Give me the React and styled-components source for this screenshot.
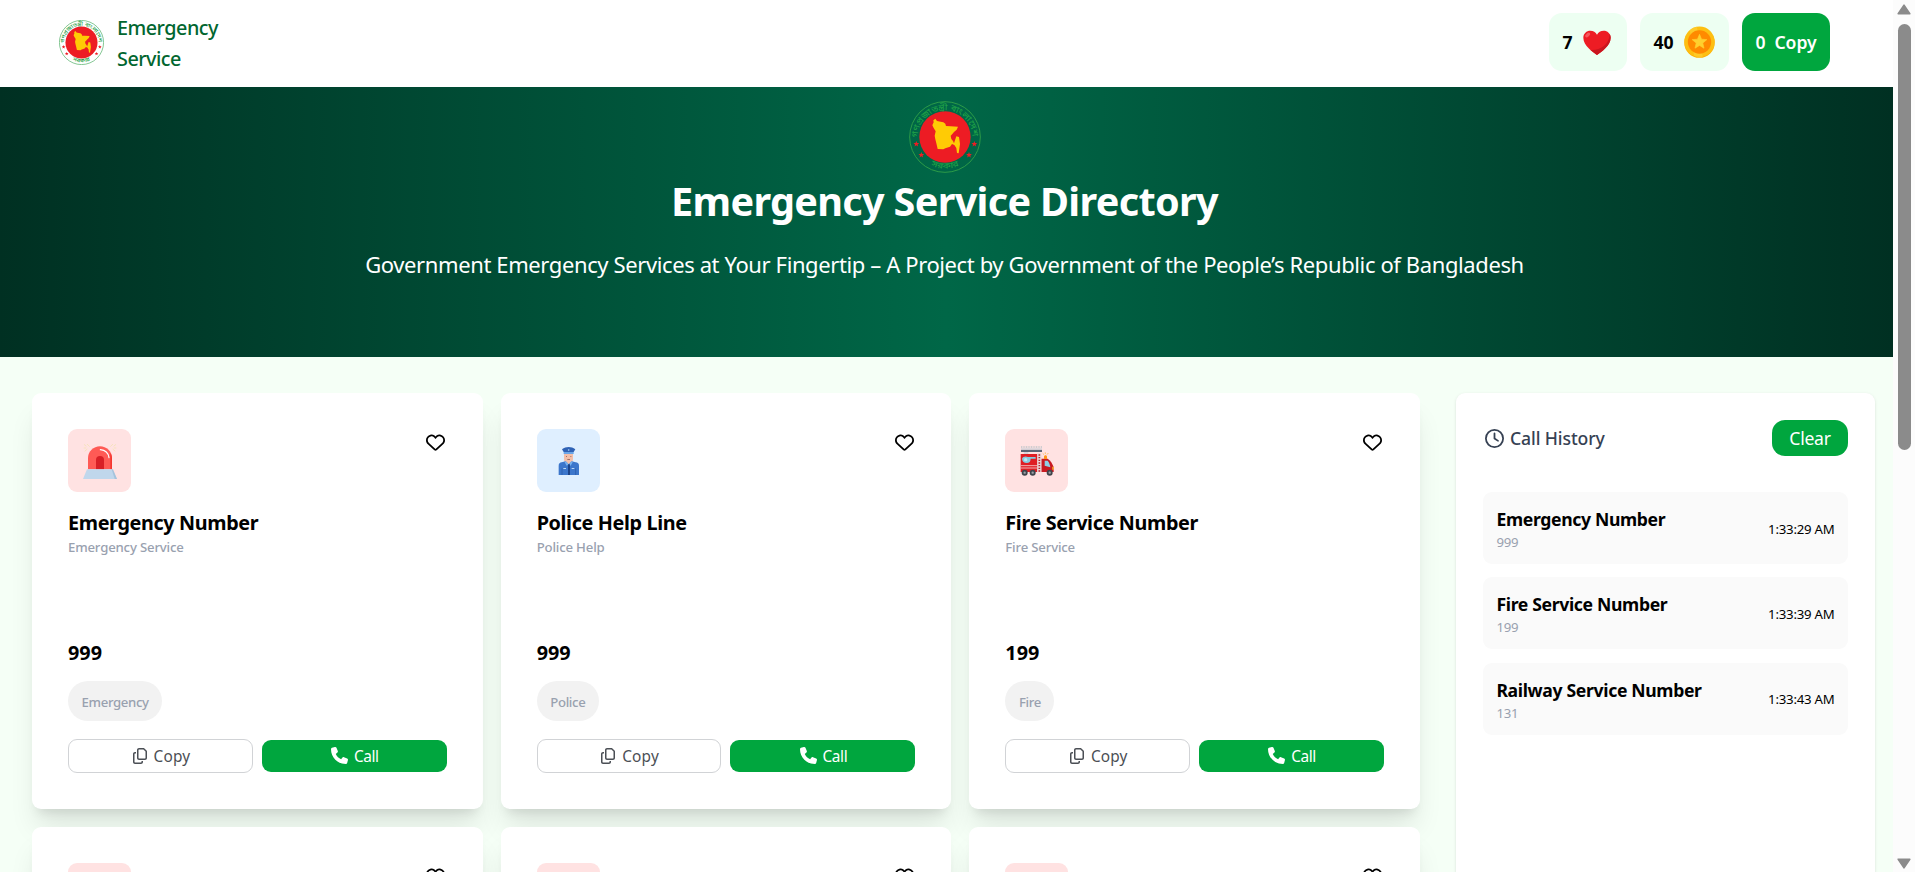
import React from "react";
import styled, { createGlobalStyle } from "styled-components";
import { FaRegHeart, FaRegCopy, FaRegClock, FaPhone } from "react-icons/fa6";

const GlobalStyle = createGlobalStyle`
  *, *::before, *::after { box-sizing: border-box; }
  body { margin: 0; overflow: hidden; background: #f5fff6; color: #000; font-family: "Noto Sans", "Open Sans", sans-serif; }
  h1, h2, h3, p { margin: 0; }
  button { font-family: inherit; cursor: pointer; }
  svg { display: block; flex: none; }
`;

const Window = styled.div`
  display: flex;
  width: 100%;
  height: 100vh;
  overflow: hidden;
`;

const Page = styled.div`
  flex: 1;
  min-width: 0;
  height: 100%;
  overflow: hidden;
`;

const Scrollbar = styled.div`
  width: 22px;
  height: 100%;
  padding: 4px 0 3px;
  background: #fcfcfc;
  display: flex;
  flex-direction: column;
  align-items: center;
  justify-content: space-between;
`;

const ScrollTrack = styled.div`
  flex: 1;
  width: 13px;
  margin: 9px 0;
`;

const ScrollThumb = styled.div`
  height: 426px;
  border-radius: 7px;
  background: #8b8b8b;
`;

const Navbar = styled.nav`
  height: 87px;
  padding: 0 63px 3px 59px;
  background: #fff;
  display: flex;
  align-items: center;
  justify-content: space-between;
`;

const Brand = styled.div`
  display: flex;
  align-items: center;
  gap: 13px;
`;

const BrandName = styled.h3`
  width: 110px;
  padding-top: 4px;
  font-size: 19.8px;
  line-height: 30.8px;
  font-weight: 500;
  letter-spacing: -0.5px;
  color: #016630;
`;

const Counters = styled.div`
  display: flex;
  gap: 13px;
`;

const Counter = styled.div`
  width: ${(p) => p.$width}px;
  height: 58px;
  padding-left: 13.5px;
  border-radius: 13px;
  display: flex;
  align-items: center;
  gap: ${(p) => (p.$solid ? 8.8 : 10.5)}px;
  font-size: 17.6px;
  font-weight: ${(p) => (p.$solid ? 600 : 700)};
  background: ${(p) => (p.$solid ? "#00a63e" : "#edfff2")};
  color: ${(p) => (p.$solid ? "#fff" : "#000")};
`;

const Hero = styled.header`
  height: 270px;
  padding: 14px 4px 0 0;
  display: flex;
  flex-direction: column;
  align-items: center;
  color: #fff;
  background: linear-gradient(90deg, #003022 0%, #006747 50%, #003022 100%);
`;

const HeroTitle = styled.h1`
  margin-top: 6.3px;
  font-size: 39.6px;
  line-height: 44px;
  font-weight: 700;
  letter-spacing: -0.68px;
`;

const HeroText = styled.p`
  margin-top: 25.5px;
  font-size: 22px;
  line-height: 30.8px;
  letter-spacing: -0.39px;
  white-space: nowrap;
`;

const Main = styled.main`
  padding: 36px 18px 0 32px;
  display: grid;
  grid-template-columns: 1388px 419px;
  gap: 36px;
`;

const CardGrid = styled.section`
  display: grid;
  grid-template-columns: repeat(3, 1fr);
  gap: 18px;
  align-content: start;
`;

const Card = styled.article`
  height: 416px;
  padding: 36px;
  border-radius: 9px;
  background: #fff;
  box-shadow: 0 22px 27.5px -5.5px rgba(0, 0, 0, 0.1), 0 8.8px 11px -6.6px rgba(0, 0, 0, 0.1);
`;

const CardTop = styled.div`
  display: flex;
  justify-content: space-between;
`;

const IconTile = styled.div`
  width: 63px;
  height: 63px;
  border-radius: 9px;
  background: ${(p) => p.$tint};
`;

const FavButton = styled.button`
  height: 20px;
  margin: 3px 1.5px 0 0;
  padding: 0;
  border: 0;
  background: none;
  color: #000;
`;

const CardTitle = styled.h2`
  margin-top: 15.8px;
  font-size: 19.8px;
  line-height: 30.8px;
  font-weight: 700;
  letter-spacing: -0.36px;
`;

const CardSubtitle = styled.p`
  padding-top: 0.8px;
  font-size: 13.2px;
  line-height: 17.6px;
  font-weight: 500;
  letter-spacing: -0.18px;
  color: #99a1af;
`;

const CardNumber = styled.h2`
  margin-top: 81.2px;
  font-size: 19.8px;
  line-height: 30.8px;
  font-weight: 700;
`;

const Badge = styled.span`
  display: block;
  width: fit-content;
  height: 40px;
  margin-top: 11.8px;
  padding: 13.2px 13.6px 0;
  border-radius: 20px;
  background: #f2f2f2;
  color: #99a1af;
  font-size: 13.2px;
  line-height: 17.6px;
  font-weight: 500;
  letter-spacing: -0.36px;
`;

const Actions = styled.div`
  margin-top: 18px;
  display: grid;
  grid-template-columns: 1fr 1fr;
  gap: 9px;
  align-items: center;
`;

const CopyButton = styled.button`
  height: 34px;
  padding: 0 0 0 1px;
  border: 1px solid #d1d3d6;
  border-radius: 9px;
  background: #fff;
  color: #4b4f55;
  display: flex;
  align-items: center;
  justify-content: center;
  gap: 6px;
  font-size: 15.4px;
  letter-spacing: 0.15px;
`;

const CallButton = styled(CopyButton)`
  height: 32px;
  border: 0;
  background: #00a63e;
  color: #fff;
  letter-spacing: -0.4px;
`;

const ButtonLabel = styled.span`
  padding-top: 1.5px;
`;

const History = styled.aside`
  height: 620px;
  padding: 27px;
  border-radius: 9px;
  background: #fff;
  box-shadow: 0 1.1px 3.3px rgba(0, 0, 0, 0.1), 0 1.1px 2.2px -1.1px rgba(0, 0, 0, 0.1);
`;

const HistoryHeader = styled.div`
  display: flex;
  align-items: center;
  justify-content: space-between;
  margin-bottom: 36px;
`;

const HistoryTitle = styled.h3`
  display: flex;
  align-items: center;
  gap: 6px;
  padding-left: 2px;
  font-size: 17.6px;
  font-weight: 500;
  letter-spacing: -0.1px;
  color: #364153;
`;

const ClearButton = styled.button`
  width: 76px;
  height: 36px;
  border: 0;
  border-radius: 13px;
  background: #00a63e;
  color: #fff;
  font-size: 17.6px;
  letter-spacing: -0.25px;
`;

const HistoryList = styled.div`
  display: grid;
  gap: 13.2px;
`;

const HistoryItem = styled.div`
  height: 72.1px;
  padding: 14px 13.5px 0 13.4px;
  border-radius: 9px;
  background: #fafafa;
  display: flex;
  justify-content: space-between;
`;

const CallName = styled.h3`
  font-size: 17.6px;
  line-height: 26.4px;
  font-weight: 700;
  letter-spacing: -0.34px;
`;

const CallNumber = styled.p`
  margin-top: 1.6px;
  font-size: 13.2px;
  line-height: 17.6px;
  letter-spacing: -0.2px;
  color: #99a1af;
`;

const CallTime = styled.span`
  margin-top: 14.6px;
  font-size: 13.2px;
  line-height: 17.6px;
  letter-spacing: -0.22px;
`;

const star = (cx, cy, r) =>
  Array.from({ length: 10 }, (_, i) => {
    const a = -Math.PI / 2 + (i * Math.PI) / 5;
    const q = i % 2 ? r * 0.45 : r;
    return `${(cx + q * Math.cos(a)).toFixed(2)},${(cy + q * Math.sin(a)).toFixed(2)}`;
  }).join(" ");

function Emblem({ size, id }) {
  return (
    <svg width={size} height={size} viewBox="-108 -108 216 216">
      <defs>
        <path id={`${id}-top`} d="M-82 2A82 82 0 0 1 82 2" />
        <path id={`${id}-bottom`} d="M-62 72A95 95 0 0 0 62 72" />
      </defs>
      <circle r="106" fill="none" stroke="#2f9e48" strokeWidth="2.8" />
      <circle r="77" fill="#ed1c24" />
      <polygon
        fill="#ffcb05"
        points="-35,-50 -29,-55 -24,-48 -13,-46 -5,-44 1,-40 3,-33 17,-32 39,-31 35,-22 27,-15 22,-9 17,-4 19,6 24,12 27,19 31,7 34,-2 42,0 45,21 41,49 36,48 34,33 28,24 21,21 15,29 1,34 -5,37 -22,36 -26,19 -29,7 -31,-4 -28,-17 -34,-27 -38,-35 -34,-44"
      />
      <g fill="#ed1c24">
        <polygon points={star(-86, 21, 9)} />
        <polygon points={star(-71, 54, 9)} />
        <polygon points={star(72, 54, 9)} />
        <polygon points={star(88, 21, 9)} />
      </g>
      <g fill="#1f9f46" fontFamily="Noto Sans Bengali, Noto Sans, sans-serif" fontWeight="500">
        <text fontSize="26">
          <textPath href={`#${id}-top`} textLength="254" lengthAdjust="spacingAndGlyphs">
            গণপ্রজাতন্ত্রী বাংলাদেশ
          </textPath>
        </text>
        <text fontSize="25" textAnchor="middle">
          <textPath href={`#${id}-bottom`} startOffset="50%" textLength="88" lengthAdjust="spacingAndGlyphs">
            সরকার
          </textPath>
        </text>
      </g>
    </svg>
  );
}

function HeartIcon() {
  return (
    <svg width="28" height="25" viewBox="0 0 84 75">
      <path fill="#ed1c24" d="M42 75C30 66 1 47 1 23 1 10 11 2 22 2c9 0 16 4 20 12C46 6 53 2 62 2c11 0 21 8 21 21 0 24-29 43-41 52z" />
      <path fill="#c9151e" d="M80 12c2 3 3 7 3 11 0 24-29 43-41 52-5-4-12-9-19-15 26 2 56-14 57-48z" />
      <ellipse cx="14" cy="15" rx="9" ry="5" transform="rotate(-42 14 15)" fill="#f6585d" />
    </svg>
  );
}

function CoinIcon() {
  return (
    <svg width="31" height="32" viewBox="-46 -48 92 96">
      <circle r="45.5" cy="2" fill="#ffb000" />
      <circle r="45.5" cy="-1" fill="#fdbf12" />
      <path d="M-29-36A45 45 0 0 1-8-46L10 44A45 45 0 0 1-16 42z" fill="#ffd43a" opacity=".55" />
      <circle r="35" fill="#ff8a00" />
      <polygon points={star(0, 0, 23)} fill="#ffd02e" stroke="#ffd02e" strokeWidth="2" strokeLinejoin="round" />
    </svg>
  );
}

function SirenIcon() {
  return (
    <svg width="63" height="63" viewBox="0 0 189 189">
      <g stroke="#f6e3bd" strokeWidth="3" fill="none">
        <path d="M48 46l7 6M57 45l8 8M47 57h8M50 67l8-7M144 46l-7 6M135 45l-8 8M145 57h-8M142 67l-8-7" />
      </g>
      <path fill="#ff5a55" d="M60 121V88a36 36 0 0 1 72 0v33z" />
      <path fill="#f4362f" d="M127 121V72c3 5 5 10 5 16v33z" />
      <path fill="#d81f26" d="M84 121V93a12 12 0 0 1 24 0v28z" />
      <path d="M97 62c14 1 24 10 26 24" stroke="#fff" strokeWidth="3.5" fill="none" strokeLinecap="round" />
      <path fill="#c0d7ec" d="M57 121h76l14 29H45z" />
      <path fill="#a5c3dc" d="M131 121h4l12 29h-7z" />
    </svg>
  );
}

function PoliceIcon() {
  return (
    <svg width="63" height="63" viewBox="0 0 189 189">
      <path fill="#f3bfa9" d="M81 75h27v14c0 9-4 13-6 14v9l-7 7-8-7v-9c-4-3-6-7-6-14z" />
      <path fill="#2f62b5" d="M75 61c6-5 13-7 20-7s14 2 20 7l-5 8H80z" />
      <path fill="#6aa5e8" d="M80 69h30v6H80z" />
      <circle cx="95" cy="63" r="2.5" fill="#b9d7f7" />
      <path fill="#8a5a50" d="M87 81h3v2h-3zM100 81h3v2h-3zM91 90h8v2h-8z" />
      <path fill="#3c76cb" d="M65 138v-28c0-7 4-9 9-10l12-3 9 9 9-9 12 3c6 1 10 3 10 10v28z" />
      <path fill="#76b0ed" d="M86 96l9 10-6 4-6-10zM104 96l-9 10 6 4 6-10z" />
      <path fill="#1d4489" d="M93 106h6v32h-6z" />
      <path stroke="#2858a5" strokeWidth="2" d="M75 118v20M116 118v20" />
      <path fill="#b9d7f7" d="M79 117h8v3h-8zM104 117h8v3h-8z" />
    </svg>
  );
}

function FireTruckIcon() {
  return (
    <svg width="63" height="63" viewBox="0 0 189 189">
      <path stroke="#d0cdd0" strokeWidth="6" strokeDasharray="3 2" d="M48 54h63" />
      <path fill="#5b6575" d="M48 62h63v7H48z" />
      <path fill="#d7d4da" d="M48 58h63v4H48zM56 69h14v6H56z" />
      <path fill="#df1d24" d="M47 75h50v54H47z" />
      <path fill="#c91a21" d="M109 129V89h19c10 6 14 15 18 25v15z" />
      <path fill="#e8d5d7" d="M97 73h12v56H97z" />
      <path stroke="#b9242b" strokeWidth="5" strokeDasharray="4 4" d="M103 76v52" />
      <path fill="#86cce1" d="M51 89c2-7 12-8 18-5h23v5H77c0 8-4 13-12 13S52 98 51 89z" />
      <circle cx="62" cy="92" r="5" fill="#c0e7f2" />
      <path stroke="#f2b1b4" strokeWidth="3" d="M47 110h50M47 117h50" />
      <path fill="#8fd0e4" d="M119 95h9c4 5 7 12 8 20l-17-5z" />
      <path fill="#ff9518" d="M117 90v-7c0-6 9-6 9 0v7z" />
      <path stroke="#ffbb55" strokeWidth="2.5" d="M113 73l4 4M121 70v5M130 72l-4 5" />
      <path fill="#ffc52e" d="M142 113h4v9h-4z" />
      <g fill="#3f454c">
        <circle cx="59" cy="131" r="9" />
        <circle cx="83" cy="131" r="9" />
        <circle cx="134" cy="131" r="9" />
      </g>
      <g fill="#9ba1a7">
        <circle cx="59" cy="131" r="3.5" />
        <circle cx="83" cy="131" r="3.5" />
        <circle cx="134" cy="131" r="3.5" />
      </g>
    </svg>
  );
}

const services = [
  { icon: SirenIcon, tint: "#ffe2e2", name: "Emergency Number", subtitle: "Emergency Service", number: "999", tag: "Emergency" },
  { icon: PoliceIcon, tint: "#dfefff", name: "Police Help Line", subtitle: "Police Help", number: "999", tag: "Police" },
  { icon: FireTruckIcon, tint: "#ffe2e2", name: "Fire Service Number", subtitle: "Fire Service", number: "199", tag: "Fire" },
];

const calls = [
  { name: "Emergency Number", number: "999", time: "1:33:29 AM" },
  { name: "Fire Service Number", number: "199", time: "1:33:39 AM" },
  { name: "Railway Service Number", number: "131", time: "1:33:43 AM" },
];

function CardHead({ tint, children }) {
  return (
    <CardTop>
      <IconTile $tint={tint}>{children}</IconTile>
      <FavButton aria-label="Favourite">
        <FaRegHeart size={19} />
      </FavButton>
    </CardTop>
  );
}

function ServiceCard({ icon: Icon, tint, name, subtitle, number, tag }) {
  return (
    <Card>
      <CardHead tint={tint}>
        <Icon />
      </CardHead>
      <CardTitle>{name}</CardTitle>
      <CardSubtitle>{subtitle}</CardSubtitle>
      <CardNumber>{number}</CardNumber>
      <Badge>{tag}</Badge>
      <Actions>
        <CopyButton>
          <FaRegCopy size={16} />
          <ButtonLabel>Copy</ButtonLabel>
        </CopyButton>
        <CallButton>
          <FaPhone size={17} />
          <ButtonLabel>Call</ButtonLabel>
        </CallButton>
      </Actions>
    </Card>
  );
}

export default function App() {
  return (
    <Window>
      <GlobalStyle />
      <Page>
        <Navbar>
          <Brand>
            <Emblem size={45} id="nav-emblem" />
            <BrandName>Emergency Service</BrandName>
          </Brand>
          <Counters>
            <Counter $width={78}>
              7 <HeartIcon />
            </Counter>
            <Counter $width={89}>
              40 <CoinIcon />
            </Counter>
            <Counter $width={88} $solid>
              <span>0</span>
              <span>Copy</span>
            </Counter>
          </Counters>
        </Navbar>
        <Hero>
          <Emblem size={72} id="hero-emblem" />
          <HeroTitle>Emergency Service Directory</HeroTitle>
          <HeroText>
            Government Emergency Services at Your Fingertip – A Project by Government of the People’s Republic of Bangladesh
          </HeroText>
        </Hero>
        <Main>
          <CardGrid>
            {services.map((s) => (
              <ServiceCard key={s.name} {...s} />
            ))}
            {[0, 1, 2].map((i) => (
              <Card key={i}>
                <CardHead tint="#ffe2e2" />
              </Card>
            ))}
          </CardGrid>
          <History>
            <HistoryHeader>
              <HistoryTitle>
                <FaRegClock size={19} />
                Call History
              </HistoryTitle>
              <ClearButton>Clear</ClearButton>
            </HistoryHeader>
            <HistoryList>
              {calls.map((c) => (
                <HistoryItem key={c.name}>
                  <div>
                    <CallName>{c.name}</CallName>
                    <CallNumber>{c.number}</CallNumber>
                  </div>
                  <CallTime>{c.time}</CallTime>
                </HistoryItem>
              ))}
            </HistoryList>
          </History>
        </Main>
      </Page>
      <Scrollbar>
        <svg width="14" height="11" viewBox="0 0 14 11">
          <path d="M7 1.2L12.8 9.8H1.2z" fill="#8b8b8b" stroke="#8b8b8b" strokeWidth="1.6" strokeLinejoin="round" />
        </svg>
        <ScrollTrack>
          <ScrollThumb />
        </ScrollTrack>
        <svg width="14" height="11" viewBox="0 0 14 11">
          <path d="M7 9.8L1.2 1.2H12.8z" fill="#8b8b8b" stroke="#8b8b8b" strokeWidth="1.6" strokeLinejoin="round" />
        </svg>
      </Scrollbar>
    </Window>
  );
}
